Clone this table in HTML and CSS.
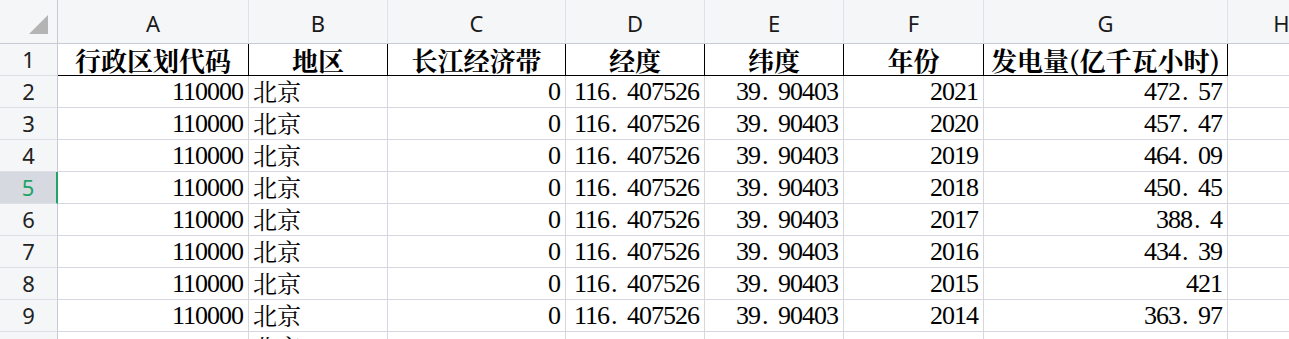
FILE: index.html
```html
<!DOCTYPE html>
<html lang="zh-CN">
<head>
<meta charset="utf-8">
<title>Sheet1</title>
<link rel="stylesheet" href="styles.css">
</head>
<body>
<div class="sheet">
  <div class="corner"><svg class="tri" width="20" height="20" viewBox="0 0 20 20"><polygon points="19,0 19,19 0,19" fill="#b4b4b4"/></svg></div>
  <div class="colh">A</div>
  <div class="colh">B</div>
  <div class="colh">C</div>
  <div class="colh">D</div>
  <div class="colh">E</div>
  <div class="colh">F</div>
  <div class="colh">G</div>
  <div class="colh">H</div>

  <div class="rowh">1</div>
  <div class="hd">行政区划代码</div>
  <div class="hd">地区</div>
  <div class="hd">长江经济带</div>
  <div class="hd">经度</div>
  <div class="hd">纬度</div>
  <div class="hd">年份</div>
  <div class="hd">发电量(亿千瓦小时)</div>
  <div class="c"></div>

  <div class="rowh">2</div>
  <div class="n">110000</div><div class="t">北京</div><div class="n">0</div><div class="n">116<span class="pt">.</span>407526</div><div class="n">39<span class="pt">.</span>90403</div><div class="n">2021</div><div class="n">472<span class="pt">.</span>57</div><div class="c"></div>

  <div class="rowh">3</div>
  <div class="n">110000</div><div class="t">北京</div><div class="n">0</div><div class="n">116<span class="pt">.</span>407526</div><div class="n">39<span class="pt">.</span>90403</div><div class="n">2020</div><div class="n">457<span class="pt">.</span>47</div><div class="c"></div>

  <div class="rowh">4</div>
  <div class="n">110000</div><div class="t">北京</div><div class="n">0</div><div class="n">116<span class="pt">.</span>407526</div><div class="n">39<span class="pt">.</span>90403</div><div class="n">2019</div><div class="n">464<span class="pt">.</span>09</div><div class="c"></div>

  <div class="rowh sel">5</div>
  <div class="n">110000</div><div class="t">北京</div><div class="n">0</div><div class="n">116<span class="pt">.</span>407526</div><div class="n">39<span class="pt">.</span>90403</div><div class="n">2018</div><div class="n">450<span class="pt">.</span>45</div><div class="c"></div>

  <div class="rowh">6</div>
  <div class="n">110000</div><div class="t">北京</div><div class="n">0</div><div class="n">116<span class="pt">.</span>407526</div><div class="n">39<span class="pt">.</span>90403</div><div class="n">2017</div><div class="n">388<span class="pt">.</span>4</div><div class="c"></div>

  <div class="rowh">7</div>
  <div class="n">110000</div><div class="t">北京</div><div class="n">0</div><div class="n">116<span class="pt">.</span>407526</div><div class="n">39<span class="pt">.</span>90403</div><div class="n">2016</div><div class="n">434<span class="pt">.</span>39</div><div class="c"></div>

  <div class="rowh">8</div>
  <div class="n">110000</div><div class="t">北京</div><div class="n">0</div><div class="n">116<span class="pt">.</span>407526</div><div class="n">39<span class="pt">.</span>90403</div><div class="n">2015</div><div class="n">421</div><div class="c"></div>

  <div class="rowh">9</div>
  <div class="n">110000</div><div class="t">北京</div><div class="n">0</div><div class="n">116<span class="pt">.</span>407526</div><div class="n">39<span class="pt">.</span>90403</div><div class="n">2014</div><div class="n">363<span class="pt">.</span>97</div><div class="c"></div>

  <div class="rowh">10</div>
  <div class="n">110000</div><div class="t">北京</div><div class="n">0</div><div class="n">116<span class="pt">.</span>407526</div><div class="n">39<span class="pt">.</span>90403</div><div class="n">2013</div><div class="n"></div><div class="c"></div>
</div>
</body>
</html>
```

FILE: styles.css
```css
html, body {
  margin: 0;
  padding: 0;
  background: #ffffff;
  overflow: hidden;
  height: 339px;
}

.sheet {
  display: grid;
  grid-template-columns: 58px 191px 139px 178px 139px 139px 140px 244px 108px;
  grid-template-rows: 44px;
  grid-auto-rows: 32px;
  width: max-content;
}

.sheet > div {
  box-sizing: border-box;
  border-right: 1px solid #d4d7df;
  border-bottom: 1px solid #d4d7df;
  white-space: nowrap;
  color: #000;
}

.corner {
  background: #f5f6f8;
  border-bottom-color: #c6cad4 !important;
  border-right-color: #c6cad4 !important;
  padding: 15px 0 0 29px;
}

.tri {
  display: block;
}

.colh {
  background: #f5f6f8;
  border-bottom-color: #c6cad4 !important;
  border-right-color: #dfe1e7 !important;
  font-family: "Noto Sans", sans-serif;
  font-size: 22px;
  line-height: 39px;
  padding-top: 4px;
  text-align: center;
  color: #1a1a1a !important;
}

.rowh {
  background: #f5f6f8;
  border-right-color: #c6cad4 !important;
  border-bottom-color: #dcdfe5 !important;
  font-family: "Noto Sans", sans-serif;
  font-size: 22px;
  line-height: 31px;
  text-align: center;
  color: #222 !important;
}

.rowh.sel {
  background: #d6d9e0;
  color: #21a366 !important;
  border-right: 2px solid #21a366 !important;
}

.hd {
  font-family: "Noto Serif CJK SC", "Noto Sans CJK SC", serif;
  font-weight: 700;
  font-size: 26px;
  line-height: 26px;
  padding-top: 3px;
  text-align: center;
  border-right-color: #000 !important;
  border-bottom-color: #000 !important;
}

.n {
  font-family: "Liberation Serif", serif;
  font-size: 26px;
  letter-spacing: -1px;
  line-height: 26px;
  padding: 3px 5px 0 0;
  text-align: right;
}

.pt {
  display: inline-block;
  width: 18px;
  padding-left: 2px;
  box-sizing: border-box;
  text-align: left;
}

.t {
  font-family: "Noto Serif CJK SC", "Noto Sans CJK SC", serif;
  font-size: 24px;
  line-height: 24px;
  padding: 3px 0 0 4px;
  text-align: left;
}
```
